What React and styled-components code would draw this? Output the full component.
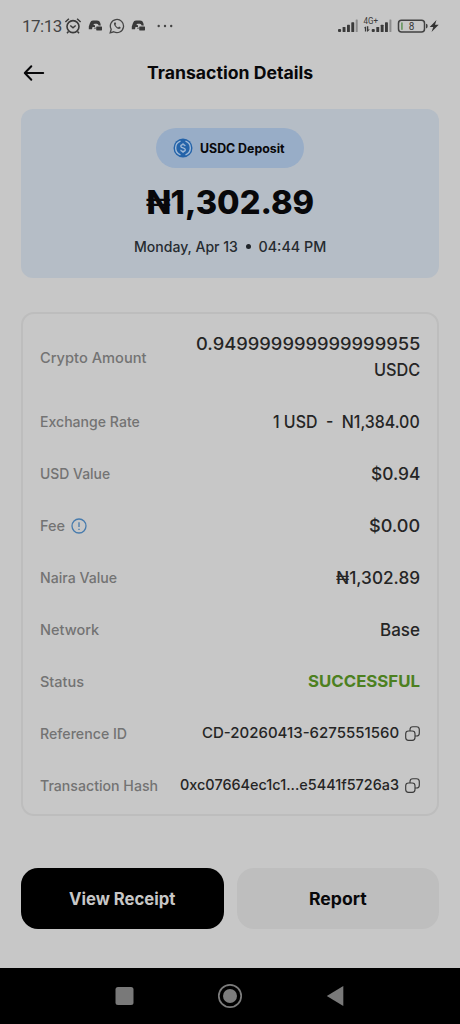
import React from "react";
import styled, { createGlobalStyle } from "styled-components";

const ink = "#08080a";
const page = "#c7c7c7";
const muted = "#737373";
const brandFont = `Inter, "Liberation Sans", sans-serif`;

const details = [
  { label: "Exchange Rate", labelWidth: 100, value: "1 USD  -  N1,384.00", width: 147 },
  { label: "USD Value", labelWidth: 70, value: "$0.94", width: 49 },
  { label: "Fee", labelWidth: 25, value: "$0.00", width: 51, info: true },
  { label: "Naira Value", labelWidth: 77, value: "₦1,302.89", width: 84 },
  { label: "Network", labelWidth: 59, value: "Base", width: 40 },
];

export default function App() {
  return (
    <Screen>
      <GlobalStyle />
      <StatusBar>
        <StatusGroup>
          <Clock>17:13</Clock>
          <AlarmIcon />
          <GameIcon />
          <ChatIcon />
          <GameIcon />
          <MoreIcon />
        </StatusGroup>
        <SignalIcons />
      </StatusBar>

      <Header>
        <BackIcon />
        <Title>
          <Fit width={166} size={17}>Transaction Details</Fit>
        </Title>
      </Header>

      <SummaryCard>
        <Pill>
          <UsdcIcon />
          <Fit width={85} size={12.5}>USDC Deposit</Fit>
        </Pill>
        <Amount>
          <Fit width={168} size={32}>₦1,302.89</Fit>
        </Amount>
        <DateLine>
          <Fit width={104} size={14.3}>Monday, Apr 13</Fit>
          <Dot />
          <Fit width={68} size={14.3}>04:44 PM</Fit>
        </DateLine>
      </SummaryCard>

      <DetailsCard>
        <Row tall>
          <Label><Fit width={107} size={14.5}>Crypto Amount</Fit></Label>
          <Stack>
            <Fit width={224} size={17}>0.949999999999999955</Fit>
            <Fit width={46} size={17}>USDC</Fit>
          </Stack>
        </Row>
        {details.map((item) => (
          <Row key={item.label}>
            <Label>
              <Fit width={item.labelWidth} size={14.5}>{item.label}</Fit>
              {item.info && <InfoIcon />}
            </Label>
            <Value><Fit width={item.width} size={17}>{item.value}</Fit></Value>
          </Row>
        ))}
        <Row>
          <Label><Fit width={44} size={14.5}>Status</Fit></Label>
          <Success><Fit width={112} size={16.5}>SUCCESSFUL</Fit></Success>
        </Row>
        <Row>
          <Label><Fit width={87} size={14.5}>Reference ID</Fit></Label>
          <CopyValue>
            <Fit width={197} size={14.7}>CD-20260413-6275551560</Fit>
            <CopyIcon />
          </CopyValue>
        </Row>
        <Row>
          <Label><Fit width={118} size={14.5}>Transaction Hash</Fit></Label>
          <CopyValue>
            <Fit width={219} size={14.7}>0xc07664ec1c1...e5441f5726a3</Fit>
            <CopyIcon />
          </CopyValue>
        </Row>
      </DetailsCard>

      <Actions>
        <Button primary>
          <Fit width={106} size={17}>View Receipt</Fit>
        </Button>
        <Button>
          <Fit width={58} size={17}>Report</Fit>
        </Button>
      </Actions>

      <NavBar>
        <svg width="20" height="20" viewBox="0 0 20 20">
          <rect x="1.5" y="1" width="18" height="18" rx="2.5" fill="#797979" />
        </svg>
        <svg width="26" height="26" viewBox="0 0 26 26">
          <circle cx="13" cy="13" r="11.2" fill="none" stroke="#7c7c7c" strokeWidth="1.7" />
          <circle cx="13" cy="13" r="7" fill="#7c7c7c" />
        </svg>
        <svg width="20" height="22" viewBox="0 0 20 22">
          <path d="M.8 11 17.3 1v20Z" fill="#797979" />
        </svg>
      </NavBar>
    </Screen>
  );
}

function Fit({ width, size, children }) {
  const ref = React.useRef(null);
  const [scale, setScale] = React.useState(1);

  React.useLayoutEffect(() => {
    setScale(width / ref.current.offsetWidth);
  }, [width, size]);

  return (
    <FitBox width={width}>
      <FitText ref={ref} size={size} style={{ transform: `scaleX(${scale})` }}>
        {children}
      </FitText>
    </FitBox>
  );
}

const AlarmIcon = () => (
  <svg width="18" height="18" viewBox="0 0 18 18" fill="none" stroke="#3a3a3a">
    <circle cx="9" cy="9.6" r="6" strokeWidth="1.6" />
    <path d="M1.4 5 4.9 1.8M16.6 5l-3.5-3.2M4.5 14.5 3 16.2M13.5 14.5l1.5 1.7" strokeWidth="1.5" />
    <path d="m6.3 8.5 2.7 2.3 2.7-2.3" strokeWidth="1.5" />
  </svg>
);

const GameIcon = () => (
  <svg width="15" height="13" viewBox="0 0 15 13" fill="#3a3a3a">
    <path d="M.8 10.2V7.4L2 4Q2.800 1.600 5 1.600h4Q11.600 1.600 12.300 4l.5 2.600h-2.200Q10.400 4.800 8.700 4.800H6.900Q5.600 4.800 5.500 6.100L7 6.300v1.600H4.500L4 10.200Z" />
    <rect x="8.2" y="7.4" width="5.8" height="4" rx=".6" />
    <path d="M6.5 8.5h1v1.600h-1Z" />
  </svg>
);

const ChatIcon = () => (
  <svg width="16" height="16" viewBox="0 0 16 16" fill="none" stroke="#454545">
    <path d="m1.2 14.800 1-3.500A6.600 6.600 0 1 1 4.700 13.800Z" strokeWidth="1.3" />
    <path
      d="M5.8 4.300c-1.200.7-1.100 2.200.2 4 1.500 2 3.700 3.500 5.200 2.300.7-.6.5-1.200.2-1.400l-1.300-.7-1 1C7.700 8.800 6.800 7.700 6.500 6.700l.7-.8-.6-1.300Z"
      fill="#454545"
      stroke="none"
    />
  </svg>
);

const MoreIcon = () => (
  <svg width="16" height="4" viewBox="0 0 16 4" fill="#444">
    <circle cx="1.7" cy="2" r="1.2" />
    <circle cx="8" cy="2" r="1.2" />
    <circle cx="14.2" cy="2" r="1.2" />
  </svg>
);

const SignalBars = ({ x }) => (
  <g transform={`translate(${x} 0)`}>
    <rect x="0" y="13" width="3.1" height="3" rx="1" />
    <rect x="4.6" y="11" width="2.9" height="5" rx=".6" />
    <rect x="9" y="8.7" width="2.9" height="7.3" rx=".6" />
    <rect x="13.3" y="6.3" width="2.9" height="9.7" rx=".6" />
    <rect x="17.7" y="3.5" width="2" height="12.5" rx=".5" fill="#8c8c8c" />
  </g>
);

const SignalIcons = () => (
  <svg width="103" height="20" viewBox="0 0 103 20">
    <g fill="#3a3a3a">
      <SignalBars x={1} />
      <SignalBars x={34.7} />
      <path d="m27 11.8 2.2-1.5v5.2h-1.3v-3Zm3-1.5h1.3v3.2h1.7l-3 2.5Z" />
      <text x="26.5" y="8" fontFamily="Roboto" fontSize="8.5" textLength="14.5" lengthAdjust="spacingAndGlyphs">4G+</text>
    </g>
    <rect x="61.5" y="4.3" width="26" height="11.7" rx="3" fill="none" stroke="#414141" strokeWidth="1.5" />
    <rect x="64" y="6.5" width="1.8" height="7.3" fill="#719b69" />
    <path d="M89 7.8q1.7 0 1.7 2.3T89 12.4Z" fill="#414141" />
    <text x="71.8" y="13.7" fontFamily="Roboto" fontSize="10" fill="#3a3a3a">8</text>
    <path d="m99.5 4-6.8 6.9h3.6l-1.8 5.2 7.2-7.3h-3.7Z" fill="#333" />
  </svg>
);

const BackIcon = () => (
  <svg width="22" height="18" viewBox="0 0 22 18" fill="none" stroke={ink} strokeWidth="2" strokeLinecap="round" strokeLinejoin="round">
    <path d="M8.3 2.2 1.8 9l6.5 6.8M2 9h18.2" />
  </svg>
);

const UsdcIcon = () => (
  <svg width="20" height="20" viewBox="0 0 20 20" fill="none">
    <circle cx="10" cy="10" r="9.5" fill="#2463a9" />
    <path d="M7.5 3.2a7.2 7.2 0 0 0 0 13.6M12.5 3.2a7.2 7.2 0 0 1 0 13.6" stroke="#a2bbd8" strokeWidth="1.4" />
    <path d="M12.2 8.2C12 7.1 11.1 6.6 10 6.6c-1.3 0-2.2.6-2.2 1.6 0 2.3 4.5 1.2 4.5 3.6 0 1.1-1 1.7-2.3 1.7s-2.2-.6-2.300-1.700M10 5.200v1.400M10 13.500v1.400" stroke="#a2bbd8" strokeWidth="1.3" />
  </svg>
);

const InfoIcon = () => (
  <svg width="16" height="16" viewBox="0 0 16 16" fill="none" stroke="#477bad">
    <circle cx="8" cy="8" r="7" strokeWidth="1.3" />
    <path d="M8 4.2v4.9M8 10.7v1.3" strokeWidth="1.3" />
  </svg>
);

const CopyIcon = () => (
  <svg width="15" height="15" viewBox="0 0 15 15" fill="none" stroke="#3a3a3a" strokeWidth="1.15">
    <rect x=".7" y="5" width="9.3" height="9.3" rx="2.8" />
    <path d="M5 5V3.5Q5 .7 7.8 .7h3.7q2.8 0 2.8 2.8v3.7q0 2.8-2.8 2.8H10" />
  </svg>
);

const GlobalStyle = createGlobalStyle`
  * {
    box-sizing: border-box;
  }

  body {
    margin: 0;
    background: ${page};
  }

  svg {
    display: block;
    flex-shrink: 0;
  }
`;

const Screen = styled.main`
  display: flex;
  flex-direction: column;
  width: 460px;
  height: 1024px;
  overflow: hidden;
  background: ${page};
  color: ${ink};
  font-family: ${brandFont};
`;

const StatusBar = styled.div`
  display: flex;
  align-items: center;
  justify-content: space-between;
  height: 51px;
  padding: 0 20px 0 22px;
`;

const StatusGroup = styled.div`
  display: flex;
  align-items: center;

  svg + svg {
    margin-left: 6px;
  }

  svg:last-child {
    margin-left: 11px;
  }
`;

const Clock = styled.span`
  width: 41.5px;
  color: #444;
  font-family: Roboto, sans-serif;
  font-size: 17px;
  letter-spacing: -0.5px;
`;

const Header = styled.header`
  display: grid;
  grid-template-columns: 22px 1fr 22px;
  align-items: center;
  height: 43px;
  padding: 0 23px;
`;

const Title = styled.h1`
  display: flex;
  justify-content: center;
  margin: 0;
  padding-top: 1px;
  font-weight: 700;
`;

const SummaryCard = styled.section`
  display: flex;
  flex-direction: column;
  align-items: center;
  height: 169px;
  margin: 15px 21px 0;
  padding-top: 19px;
  background: #b5bdc6;
  border-radius: 12px;
`;

const Pill = styled.div`
  display: flex;
  align-items: center;
  justify-content: center;
  gap: 7px;
  width: 148px;
  height: 40px;
  padding-right: 3px;
  background: #98adc7;
  border-radius: 20px;
  font-weight: 700;
`;

const Amount = styled.div`
  display: flex;
  align-items: center;
  height: 42px;
  margin-top: 13px;
  font-weight: 800;
`;

const DateLine = styled.div`
  display: flex;
  align-items: center;
  margin-top: 13px;
  color: #262b30;
  font-weight: 500;
`;

const Dot = styled.span`
  width: 5px;
  height: 5px;
  margin: 0 8px;
  border-radius: 50%;
  background: #20252a;
`;

const DetailsCard = styled.section`
  height: 504px;
  margin: 34px 21px 0;
  padding: 9px 17px 0 17px;
  border: 2px solid #bdbdbd;
  border-radius: 13px;
`;

const Row = styled.div`
  display: flex;
  align-items: center;
  justify-content: space-between;
  height: ${(props) => (props.tall ? "69px" : "51.9px")};
  margin-bottom: ${(props) => (props.tall ? "4px" : "0")};
  color: #252525;
  font-weight: 500;
`;

const Label = styled.div`
  display: flex;
  align-items: center;
  gap: 6px;
  color: ${muted};
`;

const Value = styled.div`
  padding-top: 2px;
`;

const Stack = styled.div`
  display: flex;
  flex-direction: column;
  align-items: flex-end;
  gap: 5px;
`;

const Success = styled.div`
  color: #4c8020;
  font-weight: 700;
`;

const CopyValue = styled.div`
  display: flex;
  align-items: center;
  gap: 6px;
  padding-top: 1px;
`;

const Actions = styled.div`
  display: flex;
  gap: 13px;
  margin: 52px 21px 0;
`;

const Button = styled.button`
  display: flex;
  flex: 1;
  align-items: center;
  justify-content: center;
  height: 61px;
  padding: 2px 0 0;
  border: 0;
  border-radius: 17px;
  background: ${(props) => (props.primary ? "#000" : "#bebebe")};
  color: ${(props) => (props.primary ? "#c7c7c7" : ink)};
  font-family: ${brandFont};
  font-weight: 700;
`;

const NavBar = styled.nav`
  display: flex;
  align-items: center;
  justify-content: center;
  gap: 83px;
  height: 56px;
  margin-top: auto;
  background: #000;
`;

const FitBox = styled.span`
  display: flex;
  width: ${(props) => props.width}px;
`;

const FitText = styled.span`
  flex-shrink: 0;
  font-size: ${(props) => props.size}px;
  line-height: 21px;
  white-space: pre;
  transform-origin: left center;
`;
